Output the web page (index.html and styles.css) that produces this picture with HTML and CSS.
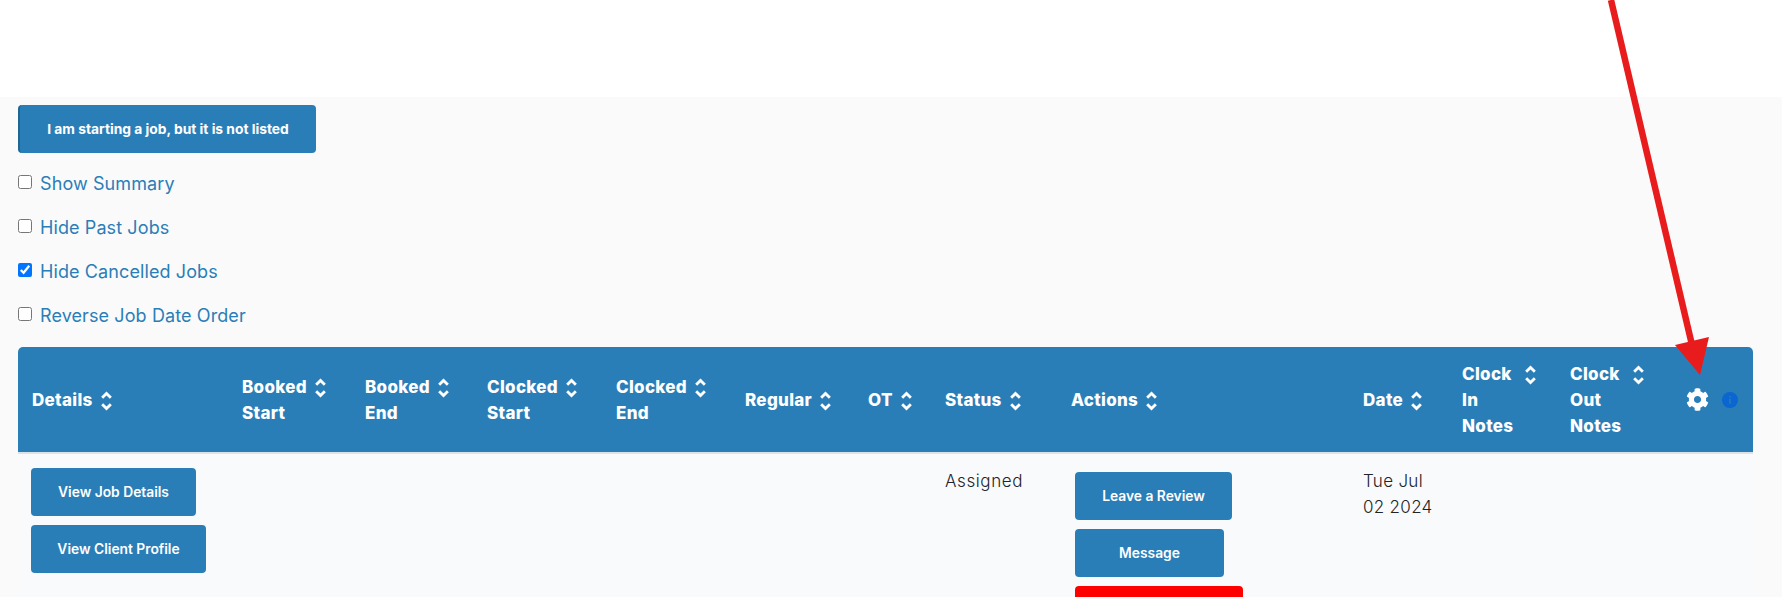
FILE: index.html
```html
<!DOCTYPE html>
<html lang="en">
<head>
    <meta charset="UTF-8">
    <meta name="viewport" content="width=device-width, initial-scale=1.0">
    <title>My Jobs</title>
    <link rel="stylesheet" href="styles.css">
</head>
<body>
<div class="top-bar"></div>

<div class="content">
    <button class="btn btn-start">I am starting a job, but it is not listed</button>

    <div class="filters">
        <label class="filter"><input type="checkbox"> Show Summary</label>
        <label class="filter"><input type="checkbox"> Hide Past Jobs</label>
        <label class="filter"><input type="checkbox" checked> Hide Cancelled Jobs</label>
        <label class="filter"><input type="checkbox"> Reverse Job Date Order</label>
    </div>

    <table class="jobs-table">
        <thead>
        <tr>
            <th class="col-details">Details <svg class="sort-icon" viewBox="0 0 12 22"><path d="M2 8l4-4 4 4M2 14l4 4 4-4"/></svg></th>
            <th class="col-booked-start">Booked <svg class="sort-icon" viewBox="0 0 12 22"><path d="M2 8l4-4 4 4M2 14l4 4 4-4"/></svg><br>Start</th>
            <th class="col-booked-end">Booked <svg class="sort-icon" viewBox="0 0 12 22"><path d="M2 8l4-4 4 4M2 14l4 4 4-4"/></svg><br>End</th>
            <th class="col-clocked">Clocked <svg class="sort-icon" viewBox="0 0 12 22"><path d="M2 8l4-4 4 4M2 14l4 4 4-4"/></svg><br>Start</th>
            <th class="col-clocked">Clocked <svg class="sort-icon" viewBox="0 0 12 22"><path d="M2 8l4-4 4 4M2 14l4 4 4-4"/></svg><br>End</th>
            <th class="col-regular">Regular <svg class="sort-icon" viewBox="0 0 12 22"><path d="M2 8l4-4 4 4M2 14l4 4 4-4"/></svg></th>
            <th class="col-ot">OT <svg class="sort-icon" viewBox="0 0 12 22"><path d="M2 8l4-4 4 4M2 14l4 4 4-4"/></svg></th>
            <th class="col-status">Status <svg class="sort-icon" viewBox="0 0 12 22"><path d="M2 8l4-4 4 4M2 14l4 4 4-4"/></svg></th>
            <th class="col-actions">Actions <svg class="sort-icon" viewBox="0 0 12 22"><path d="M2 8l4-4 4 4M2 14l4 4 4-4"/></svg></th>
            <th class="col-date">Date <svg class="sort-icon" viewBox="0 0 12 22"><path d="M2 8l4-4 4 4M2 14l4 4 4-4"/></svg></th>
            <th class="col-clock-in">Clock <svg class="sort-icon sort-icon-far" viewBox="0 0 12 22"><path d="M2 8l4-4 4 4M2 14l4 4 4-4"/></svg><br>In<br>Notes</th>
            <th class="col-clock-out">Clock <svg class="sort-icon sort-icon-far" viewBox="0 0 12 22"><path d="M2 8l4-4 4 4M2 14l4 4 4-4"/></svg><br>Out<br>Notes</th>
            <th class="col-tools">
                <div class="tools">
                    <svg class="gear-icon" viewBox="0 0 512 512"><path d="M487.4 315.7l-42.6-24.6c4.3-23.2 4.3-47 0-70.2l42.6-24.6c4.9-2.8 7.1-8.6 5.5-14-11.1-35.6-30-67.8-54.7-94.6-3.8-4.1-10-5.1-14.8-2.3L380.8 110c-17.9-15.4-38.5-27.3-60.8-35.1V25.8c0-5.6-3.9-10.5-9.4-11.7-36.7-8.2-74.3-7.8-109.2 0-5.5 1.2-9.4 6.1-9.4 11.7V75c-22.2 7.9-42.8 19.8-60.8 35.1L88.7 85.5c-4.9-2.8-11-1.9-14.8 2.3-24.7 26.7-43.6 58.9-54.7 94.6-1.7 5.4.6 11.2 5.5 14L67.3 221c-4.3 23.2-4.3 47 0 70.2l-42.6 24.6c-4.9 2.8-7.1 8.6-5.5 14 11.1 35.6 30 67.8 54.7 94.6 3.8 4.1 10 5.1 14.8 2.3l42.6-24.6c17.9 15.4 38.5 27.3 60.8 35.1v49.2c0 5.6 3.9 10.5 9.4 11.7 36.7 8.2 74.3 7.8 109.2 0 5.5-1.2 9.4-6.1 9.4-11.7v-49.2c22.2-7.9 42.8-19.8 60.8-35.1l42.6 24.6c4.9 2.8 11 1.9 14.8-2.3 24.7-26.7 43.6-58.9 54.7-94.6 1.5-5.5-.7-11.3-5.6-14.1zM256 336c-44.1 0-80-35.9-80-80s35.9-80 80-80 80 35.9 80 80-35.9 80-80 80z"/></svg>
                    <svg class="info-icon" viewBox="0 0 16 16"><circle cx="8" cy="8" r="8"/><path class="info-mark" d="M7.2 6.8h1.6v5H7.2zM7.2 4h1.6v1.6H7.2z"/></svg>
                </div>
            </th>
        </tr>
        </thead>
        <tbody>
        <tr>
            <td>
                <div class="btn-stack">
                    <button class="btn btn-job">View Job Details</button>
                    <button class="btn btn-client">View Client Profile</button>
                </div>
            </td>
            <td></td>
            <td></td>
            <td></td>
            <td></td>
            <td></td>
            <td></td>
            <td>Assigned</td>
            <td>
                <div class="btn-stack btn-stack-actions">
                    <button class="btn btn-review">Leave a Review</button>
                    <button class="btn btn-message">Message</button>
                    <button class="btn btn-danger"></button>
                </div>
            </td>
            <td class="date-cell">Tue Jul 02 2024</td>
            <td></td>
            <td></td>
            <td></td>
        </tr>
        </tbody>
    </table>
</div>

<svg class="arrow" viewBox="0 0 1782 597">
    <line x1="1611" y1="0" x2="1692" y2="345"/>
    <polygon points="1675,345 1709,337 1700,375"/>
</svg>
</body>
</html>
```

FILE: styles.css
```css
html, body {
    height: 100%;
}
body {
    margin: 0;
    overflow: hidden;
    position: relative;
    font-family: Inter, "Noto Sans", sans-serif;
    font-size: 17px;
    font-weight: 300;
    line-height: 26px;
    letter-spacing: 0.6px;
    color: #212529;
    background-color: #fafafa;
}
.top-bar {
    height: 97px;
    background-color: #fff;
}
.content {
    padding: 8px 29px 0 18px;
}
.btn {
    display: block;
    height: 48px;
    padding: 0;
    border: 0;
    border-radius: 4px;
    font-family: inherit;
    font-size: 13.8px;
    font-weight: 600;
    letter-spacing: 0;
    color: #fff;
    background-color: #2a7eb8;
}
.btn-start {
    width: 298px;
    border-left: 2px solid #1f6594;
    font-weight: 700;
}
.filters {
    margin-top: 9px;
}
.filter {
    display: flex;
    align-items: center;
    gap: 8px;
    height: 44px;
    font-size: 18px;
    font-weight: 400;
    letter-spacing: 0.1px;
    color: #2a7eb8;
}
.filter input {
    width: 14px;
    height: 14px;
    margin: 0;
    position: relative;
    top: -2px;
}
.jobs-table {
    width: 1735px;
    margin-top: 9px;
    table-layout: fixed;
    border-collapse: collapse;
    background-color: #f9fafc;
}
.jobs-table th, .jobs-table td {
    box-sizing: border-box;
    padding: 14px;
    text-align: left;
    vertical-align: top;
}
.jobs-table th {
    padding: 13.5px 14px;
    vertical-align: middle;
    font-size: 17px;
    font-weight: 800;
    letter-spacing: 0.3px;
    color: #fff;
    background-color: #2a7eb8;
    border-bottom: 2px solid #dee2e6;
}
.jobs-table th:first-child {
    border-top-left-radius: 5px;
}
.jobs-table th:last-child {
    border-top-right-radius: 5px;
}
.jobs-table .date-cell {
    letter-spacing: 0.3px;
}
.col-details { width: 210px; }
.col-booked-start { width: 123px; }
.col-booked-end { width: 122px; }
.col-clocked { width: 129px; }
.col-regular { width: 123px; }
.col-ot { width: 77px; }
.col-status { width: 126px; }
.col-actions { width: 292px; }
.col-date { width: 99px; }
.col-clock-in { width: 108px; }
.col-clock-out { width: 116px; }
.col-tools { width: 81px; }
.sort-icon {
    width: 13px;
    height: 24px;
    margin-left: 3px;
    vertical-align: middle;
    fill: none;
    stroke: #fff;
    stroke-width: 2.6;
}
.sort-icon-far {
    margin-left: 8px;
}
.tools {
    display: flex;
    align-items: center;
    gap: 13px;
}
.gear-icon {
    width: 23px;
    height: 23px;
    fill: #fff;
}
.info-icon {
    width: 16px;
    height: 16px;
    fill: #0a66d0;
}
.info-mark {
    fill: #2f78b8;
}
.btn-stack {
    display: flex;
    flex-direction: column;
    align-items: flex-start;
    gap: 9px;
    margin-left: -1px;
}
.btn-stack-actions {
    margin: 4px 0 0 4px;
}
.btn-job { width: 165px; }
.btn-client { width: 175px; }
.btn-review { width: 157px; }
.btn-message { width: 149px; }
.btn-danger {
    width: 168px;
    background-color: #f00;
}
.arrow {
    position: absolute;
    top: 0;
    left: 0;
    width: 1782px;
    height: 597px;
    pointer-events: none;
}
.arrow line {
    stroke: #e81c1c;
    stroke-width: 6.5;
}
.arrow polygon {
    fill: #e81c1c;
}
```
